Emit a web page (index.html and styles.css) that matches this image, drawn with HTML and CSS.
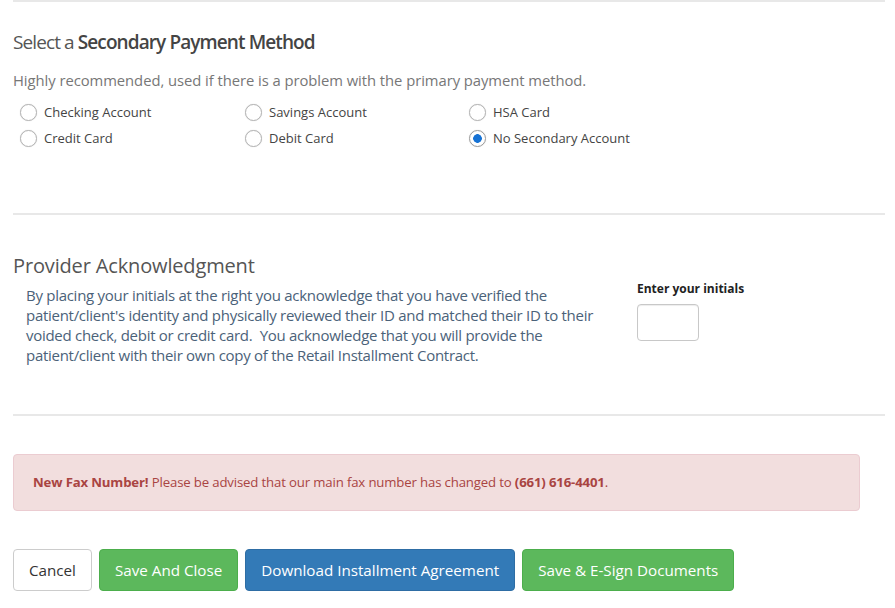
FILE: index.html
```html
<!DOCTYPE html>
<html lang="en">
    <head>
        <meta charset="UTF-8" />
        <meta name="viewport" content="width=device-width, initial-scale=1.0" />
        <title>Payment Method</title>
        <link rel="stylesheet" href="styles.css">
    </head>
    <body>
        <div class="page">
            <div class="line"></div>

            <!-- secondary payment -->
            <div class="section pay">
                <h3 class="pay_title">Select a <b>Secondary Payment Method</b></h3>
                <p class="pay_sub">Highly recommended, used if there is a problem with the primary payment method.</p>
                <div class="radio_grid">
                    <label class="radio"><input type="radio" name="sec" /> <span>Checking Account</span></label>
                    <label class="radio"><input type="radio" name="sec" /> <span>Savings Account</span></label>
                    <label class="radio"><input type="radio" name="sec" /> <span>HSA Card</span></label>
                    <label class="radio"><input type="radio" name="sec" /> <span>Credit Card</span></label>
                    <label class="radio"><input type="radio" name="sec" /> <span>Debit Card</span></label>
                    <label class="radio"><input type="radio" name="sec" checked /> <span>No Secondary Account</span></label>
                </div>
            </div>

            <div class="line"></div>

            <!-- acknowledgment -->
            <div class="section ack">
                <h3 class="ack_title">Provider Acknowledgment</h3>
                <div class="ack_row">
                    <p class="ack_text">
                        By placing your initials at the right you acknowledge that you have verified the<br />
                        patient/client's identity and physically reviewed their ID and matched their ID to their<br />
                        voided check, debit or credit card.&nbsp; You acknowledge that you will provide the<br />
                        patient/client with their own copy of the Retail Installment Contract.
                    </p>
                    <div class="initials">
                        <label for="initials">Enter your initials</label>
                        <input id="initials" type="text" />
                    </div>
                </div>
            </div>

            <div class="line"></div>

            <div class="alert">
                <b>New Fax Number!</b> Please be advised that our main fax number has changed to <b>(661) 616-4401</b>.
            </div>

            <div class="btns">
                <button class="btn btn_default" type="button">Cancel</button>
                <button class="btn btn_green" type="button">Save And Close</button>
                <button class="btn btn_blue" type="button">Download Installment Agreement</button>
                <button class="btn btn_green" type="button">Save &amp; E-Sign Documents</button>
            </div>
        </div>
    </body>
</html>
```

FILE: styles.css
```css
* {
    margin: 0px;
    padding: 0px;
    box-sizing: border-box;
}

body {
    font-family: "Open Sans", "Liberation Sans", sans-serif;
    color: #444;
    background-color: #fff;
}

.page {
    padding: 0px 10px 0px 13px;
}

.line {
    background-color: #e8e8e8;
    height: 2px;
    width: 100%;
}

/* secondary payment */
.pay {
    padding: 28px 0px 65px;
}
.pay_title {
    font-size: 19px;
    font-weight: normal;
    color: #555;
    letter-spacing: -0.9px;
    line-height: 24px;
}
.pay_title b {
    font-weight: 600;
    color: #444;
}
.pay_sub {
    margin-top: 16px;
    font-size: 14.8px;
    color: #777;
    line-height: 20px;
    letter-spacing: -0.05px;
}
.radio_grid {
    margin-top: 12px;
    padding-left: 7px;
    display: grid;
    grid-template-columns: 225px 224px 225px;
    row-gap: 6px;
}
.radio {
    display: flex;
    align-items: center;
    gap: 7px;
    font-size: 13px;
    color: #444;
    line-height: 20px;
    cursor: pointer;
}
.radio input {
    appearance: none;
    width: 17px;
    height: 17px;
    border-radius: 50%;
    border: 1.5px solid #b5b5b5;
    background-color: #fff;
    box-shadow: 0px 0px 1px #ccc;
    margin: 0px;
}
.radio input:checked {
    border: 1.5px solid #9a9a9a;
    background: radial-gradient(circle, #1672d4 0px, #1672d4 4px, #fff 4.6px);
}

/* acknowledgment */
.ack {
    padding: 38px 0px 49px;
}
.ack_title {
    font-size: 20px;
    font-weight: normal;
    color: #555;
    line-height: 26px;
    letter-spacing: -0.15px;
}
.ack_row {
    display: flex;
    align-items: flex-start;
}
.ack_text {
    width: 624px;
    padding: 6px 0px 0px 13px;
    font-size: 15px;
    line-height: 20px;
    color: #4b6279;
    letter-spacing: -0.28px;
}
.initials {
    display: flex;
    flex-direction: column;
    padding-top: 2px;
}
.initials label {
    font-size: 12px;
    font-weight: bold;
    color: #222;
    line-height: 16px;
}
.initials input {
    margin-top: 7px;
    width: 62px;
    height: 37px;
    border: 1px solid #c8c8c8;
    border-radius: 4px;
    box-shadow: inset 0px 1px 1px rgba(0, 0, 0, 0.075);
}

/* alert */
.alert {
    margin: 38px 25px 0px 0px;
    background-color: #f2dede;
    border: 1px solid #ebccd1;
    border-radius: 4px;
    color: #a94442;
    font-size: 13.2px;
    padding: 18px 19px;
    line-height: 19px;
    letter-spacing: -0.15px;
}

/* buttons */
.btns {
    margin-top: 38px;
    display: flex;
    gap: 7px;
}
.btn {
    font-family: "Open Sans", "Liberation Sans", sans-serif;
    font-size: 15.2px;
    height: 42px;
    padding: 0px 15px;
    border-radius: 4px;
    border: 1px solid transparent;
    cursor: pointer;
}
.btn_default {
    background-color: #fff;
    border-color: #ccc;
    color: #333;
}
.btn_green {
    background-color: #5cb85c;
    border-color: #4cae4c;
    color: #fff;
}
.btn_blue {
    background-color: #337ab7;
    border-color: #2e6da4;
    color: #fff;
}
```
